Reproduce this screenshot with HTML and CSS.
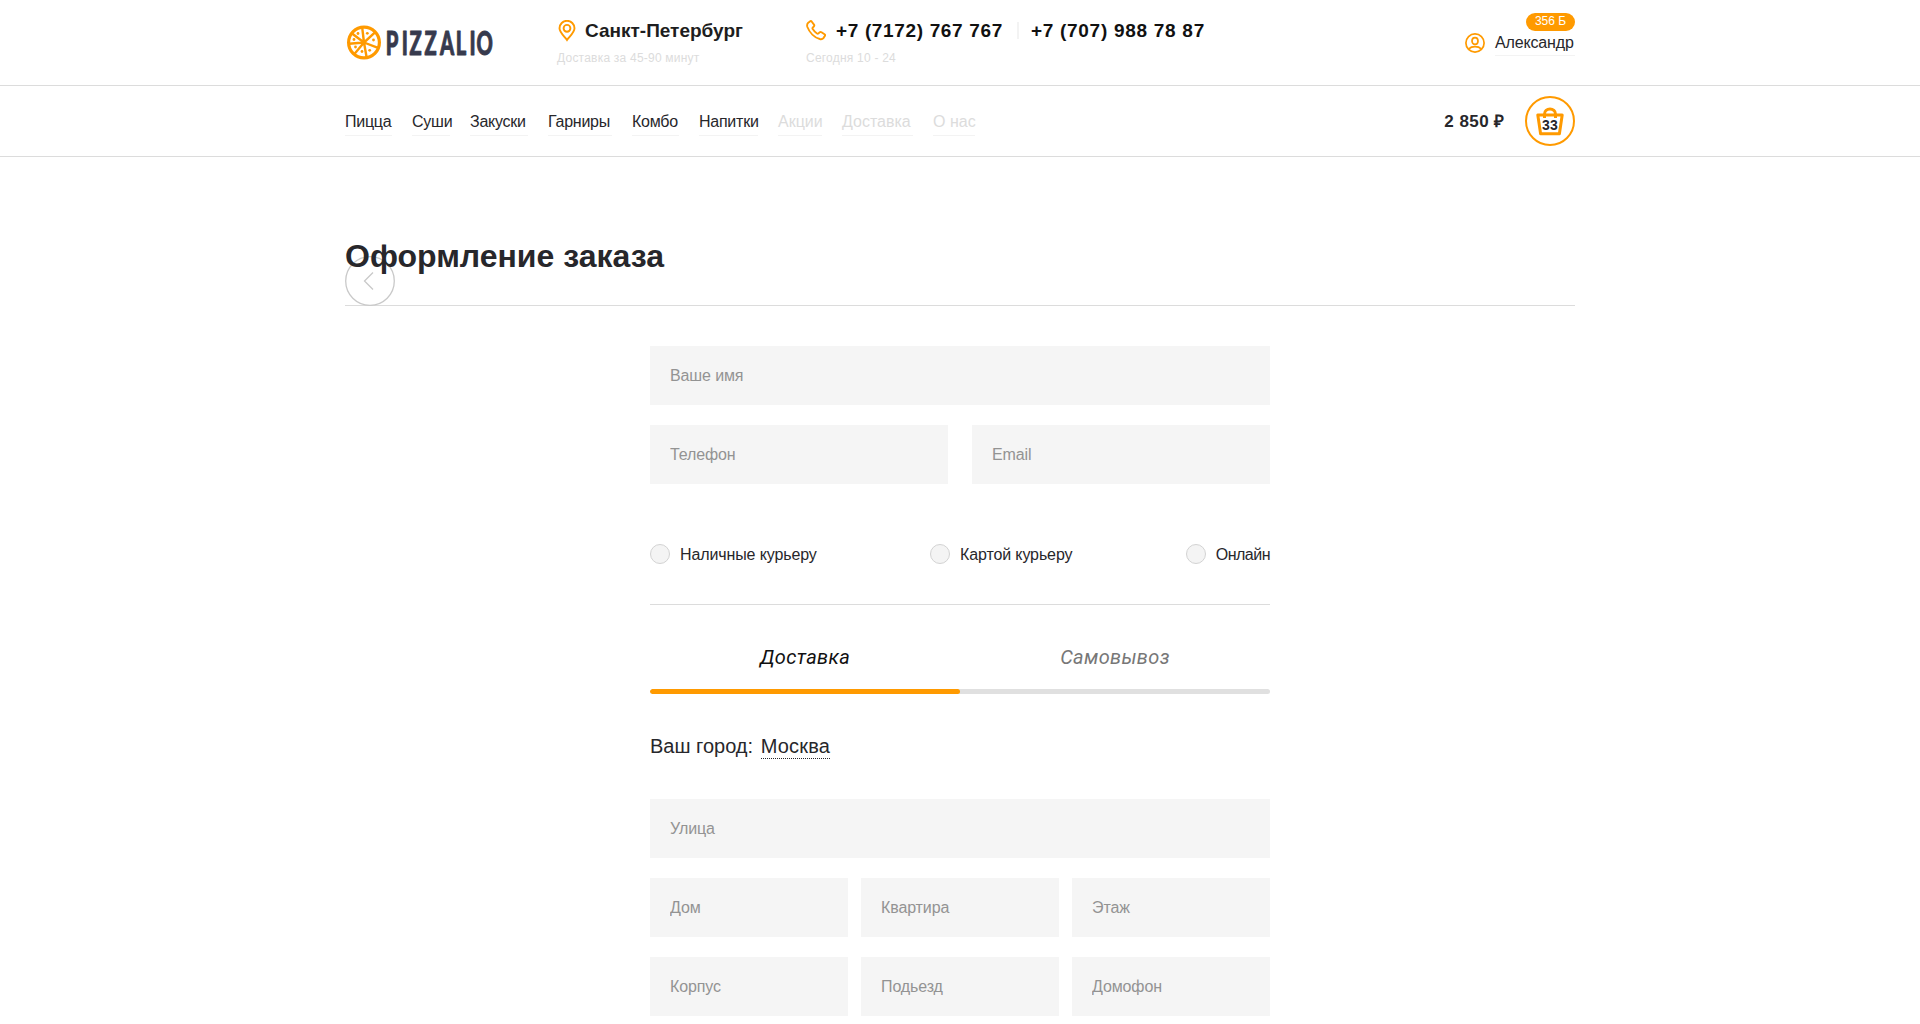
FILE: index.html
```html
<!DOCTYPE html>
<html lang="ru">
<head>
<meta charset="utf-8">
<title>Pizzalio — Оформление заказа</title>
<link rel="stylesheet" href="styles.css">
</head>
<body>
<header class="header">
  <div class="container header__inner">
    <a class="logo" aria-label="Pizzalio">
      <svg width="150" height="40" viewBox="0 0 150 40">
        <g fill="none" stroke="#ff9a00" stroke-width="3.2">
          <circle cx="19" cy="20.500" r="15.400"/>
          <path stroke-width="2.400" d="M19 20.500L17.200 5.600M19 20.500L30 10.300M19 20.500L33 25.900M19 20.500L21.600 35.300M19 20.500L9.400 32M19 20.500L4 21.800M19 20.500L7 11.500"/>
        </g>
        <g fill="#ff9a00">
          <circle cx="13" cy="11.500" r="1.400"/><circle cx="22.300" cy="11.300" r="1.400"/><circle cx="28.500" cy="18" r="1.400"/><circle cx="24.700" cy="28.300" r="1.400"/><circle cx="17" cy="29.500" r="1.400"/><circle cx="10.500" cy="25" r="1.400"/><circle cx="9" cy="17.500" r="1.400"/>
        </g>
        <text class="logo__text" transform="translate(40.700 32.500) scale(.61 1)" x="0 26.500 39 63.500 89 115 137.500 149">PIZZALIO</text>
      </svg>
    </a>
    <div class="place">
      <div class="place__row">
        <svg class="place__pin" width="18" height="22" viewBox="0 0 18 22" fill="none" stroke="#ff9a00" stroke-width="1.900"><path d="M9 20C6.500 16.500 1.500 12.500 1.500 8.300a7.500 7.500 0 0 1 15 0C16.500 12.500 11.500 16.500 9 20z"/><circle cx="9" cy="8.300" r="3.400"/></svg>
        <b class="bold bold--city">Санкт-Петербург</b>
      </div>
      <div class="note note--city">Доставка за 45-90 минут</div>
    </div>
    <div class="phones">
      <div class="place__row">
        <svg width="20" height="21" viewBox="0 0 20 21" fill="none" stroke="#ff9a00" stroke-width="1.900" stroke-linejoin="round"><path d="M2.200 2.800L4 1.400q1-.7 1.800.3L8 4.600q.7 1-.2 1.900L6.700 7.600q-.5.700 0 1.500 1.700 2.700 4.300 4.400.8.500 1.500-.1l1.200-1.100q.8-.7 1.800-.1l3 2q1 .7.300 1.800l-1.400 2.100q-1.200 1.500-3.600.9C8.500 17.500 3.500 12.500 1.400 7 .7 4.800 1.200 3.700 2.200 2.800z"/></svg>
        <b class="bold bold--phone">+7 (7172) 767 767</b>
        <i class="phones__sep"></i>
        <b class="bold bold--phone2">+7 (707) 988 78 87</b>
      </div>
      <div class="note note--hours">Сегодня 10 - 24</div>
    </div>
    <div class="user">
      <span class="user__bonus">356 Б</span>
      <div class="user__row">
        <svg width="20" height="20" viewBox="0 0 20 20" fill="none" stroke="#ff9a00" stroke-width="1.700"><circle cx="10" cy="10" r="9.100"/><ellipse cx="10" cy="8" rx="3" ry="3.400"/><path d="M3.800 15.800q2.200-2.200 6.200-2.200t6.200 2.200"/></svg>
        <span class="user__name">Александр</span>
      </div>
    </div>
  </div>
</header>
<nav class="nav">
  <div class="container nav__inner">
    <a class="nav__link" style="width:47px">Пицца</a>
    <a class="nav__link" style="width:38px">Суши</a>
    <a class="nav__link" style="width:58px">Закуски</a>
    <a class="nav__link" style="width:64px">Гарниры</a>
    <a class="nav__link" style="width:47px">Комбо</a>
    <a class="nav__link" style="width:59px">Напитки</a>
    <a class="nav__link nav__link--muted" style="width:44px">Акции</a>
    <a class="nav__link nav__link--muted" style="width:71px">Доставка</a>
    <a class="nav__link nav__link--muted" style="width:42px">О нас</a>
    <b class="nav__sum">2 850 ₽</b>
    <span class="cart">
      <svg width="28" height="29" viewBox="0 0 28 29" fill="none" stroke="#ff9a00" stroke-width="3"><path stroke-linejoin="round" d="M1.800 8h24.400l-2.800 18.700H4.600zM8.500 11V7a5.500 5 0 0 1 11 0v4"/></svg>
      <b class="cart__count">33</b>
    </span>
  </div>
</nav>
<main class="container">
  <div class="heading">
    <svg class="heading__back" width="50" height="50" viewBox="0 0 50 50" fill="none" stroke="#c9c9c9"><circle cx="25" cy="25" r="24.300" stroke-width="1.300"/><path d="M28 16.500L19.500 25l8.500 8.500" stroke-width="1.300"/></svg>
    <h1 class="heading__title">Оформление заказа</h1>
  </div>
  <form class="form">
    <div class="grid grid--one"><input class="field" placeholder="Ваше имя"></div>
    <div class="grid grid--two"><input class="field" placeholder="Телефон"><input class="field" placeholder="Email"></div>
    <div class="pay">
      <label class="pay__item"><i class="pay__dot"></i>Наличные курьеру</label>
      <label class="pay__item"><i class="pay__dot"></i>Картой курьеру</label>
      <label class="pay__item pay__item--online"><i class="pay__dot"></i>Онлайн</label>
    </div>
    <div class="tabs">
      <span class="tabs__item tabs__item--active">Доставка</span>
      <span class="tabs__item">Самовывоз</span>
    </div>
    <div class="tabs__track"><i class="tabs__bar"></i></div>
    <div class="city">Ваш город: <span class="city__name">Москва</span></div>
    <div class="grid grid--one"><input class="field" placeholder="Улица"></div>
    <div class="grid grid--three">
      <input class="field" placeholder="Дом"><input class="field" placeholder="Квартира"><input class="field" placeholder="Этаж">
      <input class="field" placeholder="Корпус"><input class="field" placeholder="Подьезд"><input class="field" placeholder="Домофон">
    </div>
  </form>
</main>
</body>
</html>
```
FILE: styles.css
```css
* { box-sizing: border-box; }
html { overflow: hidden; }
body {
  margin: 0;
  height: 1024px;
  overflow: hidden;
  font: 16px/20px "Liberation Sans", Arial, sans-serif;
  color: #27272b;
  background: #fff;
}
.container { width: 1230px; margin: 0 auto; }

.header { height: 86px; border-bottom: 1px solid #dcdcdc; }
.header__inner { display: flex; height: 85px; }
.logo { width: 212px; padding-top: 22px; }
.logo svg { display: block; }
.logo__text {
  font: 900 33px Lato, sans-serif;
  fill: #373a4d;
  stroke: #373a4d;
  stroke-width: 1px;
  stroke-linejoin: round;
}
.place { width: 249px; padding-top: 19px; }
.place__row { display: flex; height: 23px; align-items: center; white-space: nowrap; }
.place__pin { margin-left: 1px; }
.bold { font-size: 19px; line-height: 23px; color: #1d1d20; }
.bold--city { margin-left: 9px; }
.bold--phone { margin-left: 10px; letter-spacing: .65px; color: #111; }
.bold--phone2 { letter-spacing: .72px; color: #111; }
.phones { padding-top: 19px; }
.phones__sep { width: 2px; height: 17px; margin: 0 12px 0 14px; background: #f3f3f3; }
.note { margin-top: 9px; font-size: 12px; line-height: 14px; letter-spacing: .22px; color: #dcdcdc; white-space: nowrap; }
.user { display: flex; flex-direction: column; align-items: flex-end; margin-left: auto; padding-top: 13px; }
.user__bonus {
  width: 49px;
  height: 18px;
  border-radius: 9px;
  background: #ff9a00;
  color: #fff;
  font-size: 12px;
  line-height: 16px;
  text-align: center;
}
.user__row { display: flex; gap: 10px; margin-top: 1px; }
.user__row svg { margin-top: 1px; }
.user__name { width: 80px; height: 24px; border-bottom: 1px solid #f3f3f3; line-height: 21px; letter-spacing: -.15px; }

.nav { height: 71px; border-bottom: 1px solid #dcdcdc; }
.nav__inner { display: flex; gap: 20px; align-items: center; height: 70px; }
.nav__link { height: 26px; margin-top: 3px; border-bottom: 1px solid #f3f3f3; line-height: 23px; letter-spacing: -.25px; white-space: nowrap; }
.nav__link--muted { color: #dcdcdc; letter-spacing: 0; }
.nav__sum { margin: 2px 0 0 auto; font-size: 17px; letter-spacing: .5px; white-space: nowrap; }
.cart {
  position: relative;
  display: flex;
  width: 50px;
  height: 50px;
  align-items: center;
  justify-content: center;
  border: 2px solid #ff9a00;
  border-radius: 50%;
}
.cart__count { position: absolute; left: 0; right: 0; top: 18px; font-size: 14px; line-height: 18px; letter-spacing: .3px; text-align: center; }

.heading { position: relative; height: 149px; border-bottom: 1px solid #dcdcdc; }
.heading__back { position: absolute; left: 0; bottom: -1px; }
.heading__title { position: relative; margin: 0; padding-top: 79px; font-size: 32px; line-height: 40px; white-space: nowrap; }

.form { width: 620px; margin: 40px auto 0; }
.grid { display: grid; margin-bottom: 20px; }
.grid--one { grid-template-columns: 1fr; }
.grid--two { grid-template-columns: 1fr 1fr; gap: 24px; }
.grid--three { grid-template-columns: repeat(3, 1fr); gap: 20px 13px; }
.field {
  width: 100%;
  min-width: 0;
  height: 59px;
  padding: 0 20px;
  border: 0;
  border-radius: 0;
  background: #f5f5f5;
  font: inherit;
  letter-spacing: -.12px;
}
.field::placeholder { color: #939393; opacity: 1; }
.pay {
  display: flex;
  justify-content: space-between;
  height: 101px;
  padding-top: 40px;
  border-bottom: 1px solid #dcdcdc;
}
.pay__item { display: flex; gap: 10px; height: 20px; white-space: nowrap; line-height: 22px; letter-spacing: -.12px; }
.pay__item--online { letter-spacing: -.5px; }
.pay__dot { width: 20px; height: 20px; border: 1px solid #d3d3d3; border-radius: 50%; background: #f4f4f4; }
.tabs { display: flex; height: 84px; padding-top: 40px; }
.tabs__item {
  flex: 1;
  text-align: center;
  font: italic 20px/24px Roboto, sans-serif;
  letter-spacing: .3px;
  color: #777;
}
.tabs__item--active { color: #111; }
.tabs__track { height: 5px; border-radius: 3px; background: #e0e0e0; overflow: hidden; }
.tabs__bar { display: block; width: 50%; height: 5px; border-radius: 3px; background: #ff9a00; }
.city { height: 105px; padding-top: 40px; font-size: 20px; line-height: 24px; }
.city__name { display: inline-block; height: 25px; margin-left: 2px; border-bottom: 1px dotted #27272b; letter-spacing: .2px; }
```
